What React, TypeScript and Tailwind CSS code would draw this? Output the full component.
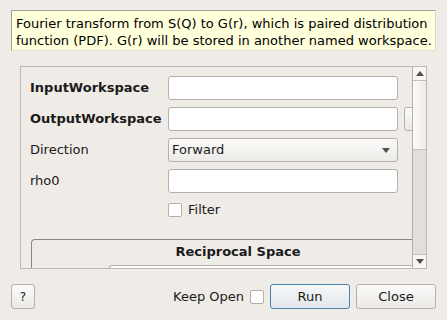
import React from "react";

const font = { fontFamily: '"DejaVu Sans", "Liberation Sans", sans-serif' };

function Input() {
  return <div className="h-[24px] w-[230px] shrink-0 rounded-[3px] border border-[#b3afaa] bg-white" />;
}

export default function App() {
  return (
    <div className="flex h-[320px] w-[447px] flex-col bg-[#efebe7] text-[13px] text-[#1a1a1a]" style={font}>
      <div className="mx-[11px] mt-[10px] h-[41px] overflow-hidden whitespace-nowrap border-l border-t border-[#a3a09c] border-b-[#e4e1dc] border-r-[#d9d6d1] border-b border-r bg-[#ffffdc] pl-[4px] pt-[4px] leading-[17px] text-black">
        <div>Fourier transform from S(Q) to G(r), which is paired distribution</div>
        <div>function (PDF). G(r) will be stored in another named workspace.</div>
      </div>

      <div className="mx-[20px] mt-[15px] flex h-[203px] border border-[#bcb8b3]">
        <div className="relative flex-1 overflow-hidden">
          <div className="flex w-[460px] flex-col pl-[9px] pt-[9px]">
            <div className="flex h-[24px] items-center">
              <div className="w-[138px] font-bold">InputWorkspace</div>
              <Input />
            </div>
            <div className="mt-[7px] flex h-[24px] items-center">
              <div className="w-[138px] font-bold">OutputWorkspace</div>
              <Input />
              <div className="ml-[6px] h-[24px] w-[30px] rounded-[3px] border border-[#b3afaa] bg-gradient-to-b from-[#fbfbfa] to-[#ebe9e6]" />
            </div>
            <div className="mt-[7px] flex h-[24px] items-center">
              <div className="w-[138px]">Direction</div>
              <div className="flex h-[24px] w-[230px] items-center justify-between rounded-[3px] border border-[#b3afaa] bg-gradient-to-b from-[#fbfaf9] to-[#ecebe8] pl-[3px] pr-[7px]">
                <span>Forward</span>
                <svg width="8" height="5" viewBox="0 0 8 5"><path d="M0 0H8L4 5Z" fill="#505050" /></svg>
              </div>
            </div>
            <div className="mt-[7px] flex h-[24px] items-center">
              <div className="w-[138px]">rho0</div>
              <Input />
            </div>
            <div className="mt-[5px] flex h-[24px] items-center pl-[138px]">
              <div className="h-[14px] w-[14px] rounded-[2px] border border-[#b3afaa] bg-white" />
              <span className="ml-[6px]">Filter</span>
            </div>
            <div className="ml-[1px] mt-[17px] h-[40px] rounded-tl-[4px] border-l border-t border-[#8a8783]">
              <div className="pt-[4px] text-center font-bold leading-[16px]" style={{ width: 412 }}>Reciprocal Space</div>
              <div className="ml-[77px] mt-[5px] h-[10px] rounded-tl-[3px] border-l border-t border-[#b3afaa] bg-white" />
            </div>
          </div>
        </div>
        <div className="flex w-[14px] flex-col border-l border-[#b3afaa]">
          <div className="flex h-[14px] items-center justify-center border-b border-[#c3c0bb] bg-[#f7f6f5]">
            <svg width="8" height="5" viewBox="0 0 8 5"><path d="M0 5H8L4 0Z" fill="#505050" /></svg>
          </div>
          <div className="h-[69px] bg-gradient-to-r from-[#fbfbfa] to-[#ecebe8] border-b border-[#c3c0bb]" />
          <div className="flex-1 bg-[#e1dfdb]" />
          <div className="flex h-[14px] items-center justify-center border-t border-[#c3c0bb] bg-[#f7f6f5]">
            <svg width="8" height="5" viewBox="0 0 8 5"><path d="M0 0H8L4 5Z" fill="#505050" /></svg>
          </div>
        </div>
      </div>

      <div className="mx-[11px] mt-[15px] flex h-[25px] items-center">
        <div className="flex h-[25px] w-[24px] items-center justify-center rounded-[3px] border border-[#b3afaa] bg-gradient-to-b from-[#fbfbfa] to-[#ebe9e6] text-[12px]">?</div>
        <div className="flex-1" />
        <span>Keep Open</span>
        <div className="ml-[6px] h-[14px] w-[14px] rounded-[2px] border border-[#b3afaa] bg-white" />
        <div className="ml-[6px] flex h-[25px] w-[80px] items-center justify-center rounded-[3px] border border-[#4a82b0] bg-gradient-to-b from-[#f6f8fa] to-[#e2e6ea]">Run</div>
        <div className="ml-[6px] flex h-[25px] w-[80px] items-center justify-center rounded-[3px] border border-[#b3afaa] bg-gradient-to-b from-[#fbfbfa] to-[#ebe9e6]">Close</div>
      </div>
    </div>
  );
}
